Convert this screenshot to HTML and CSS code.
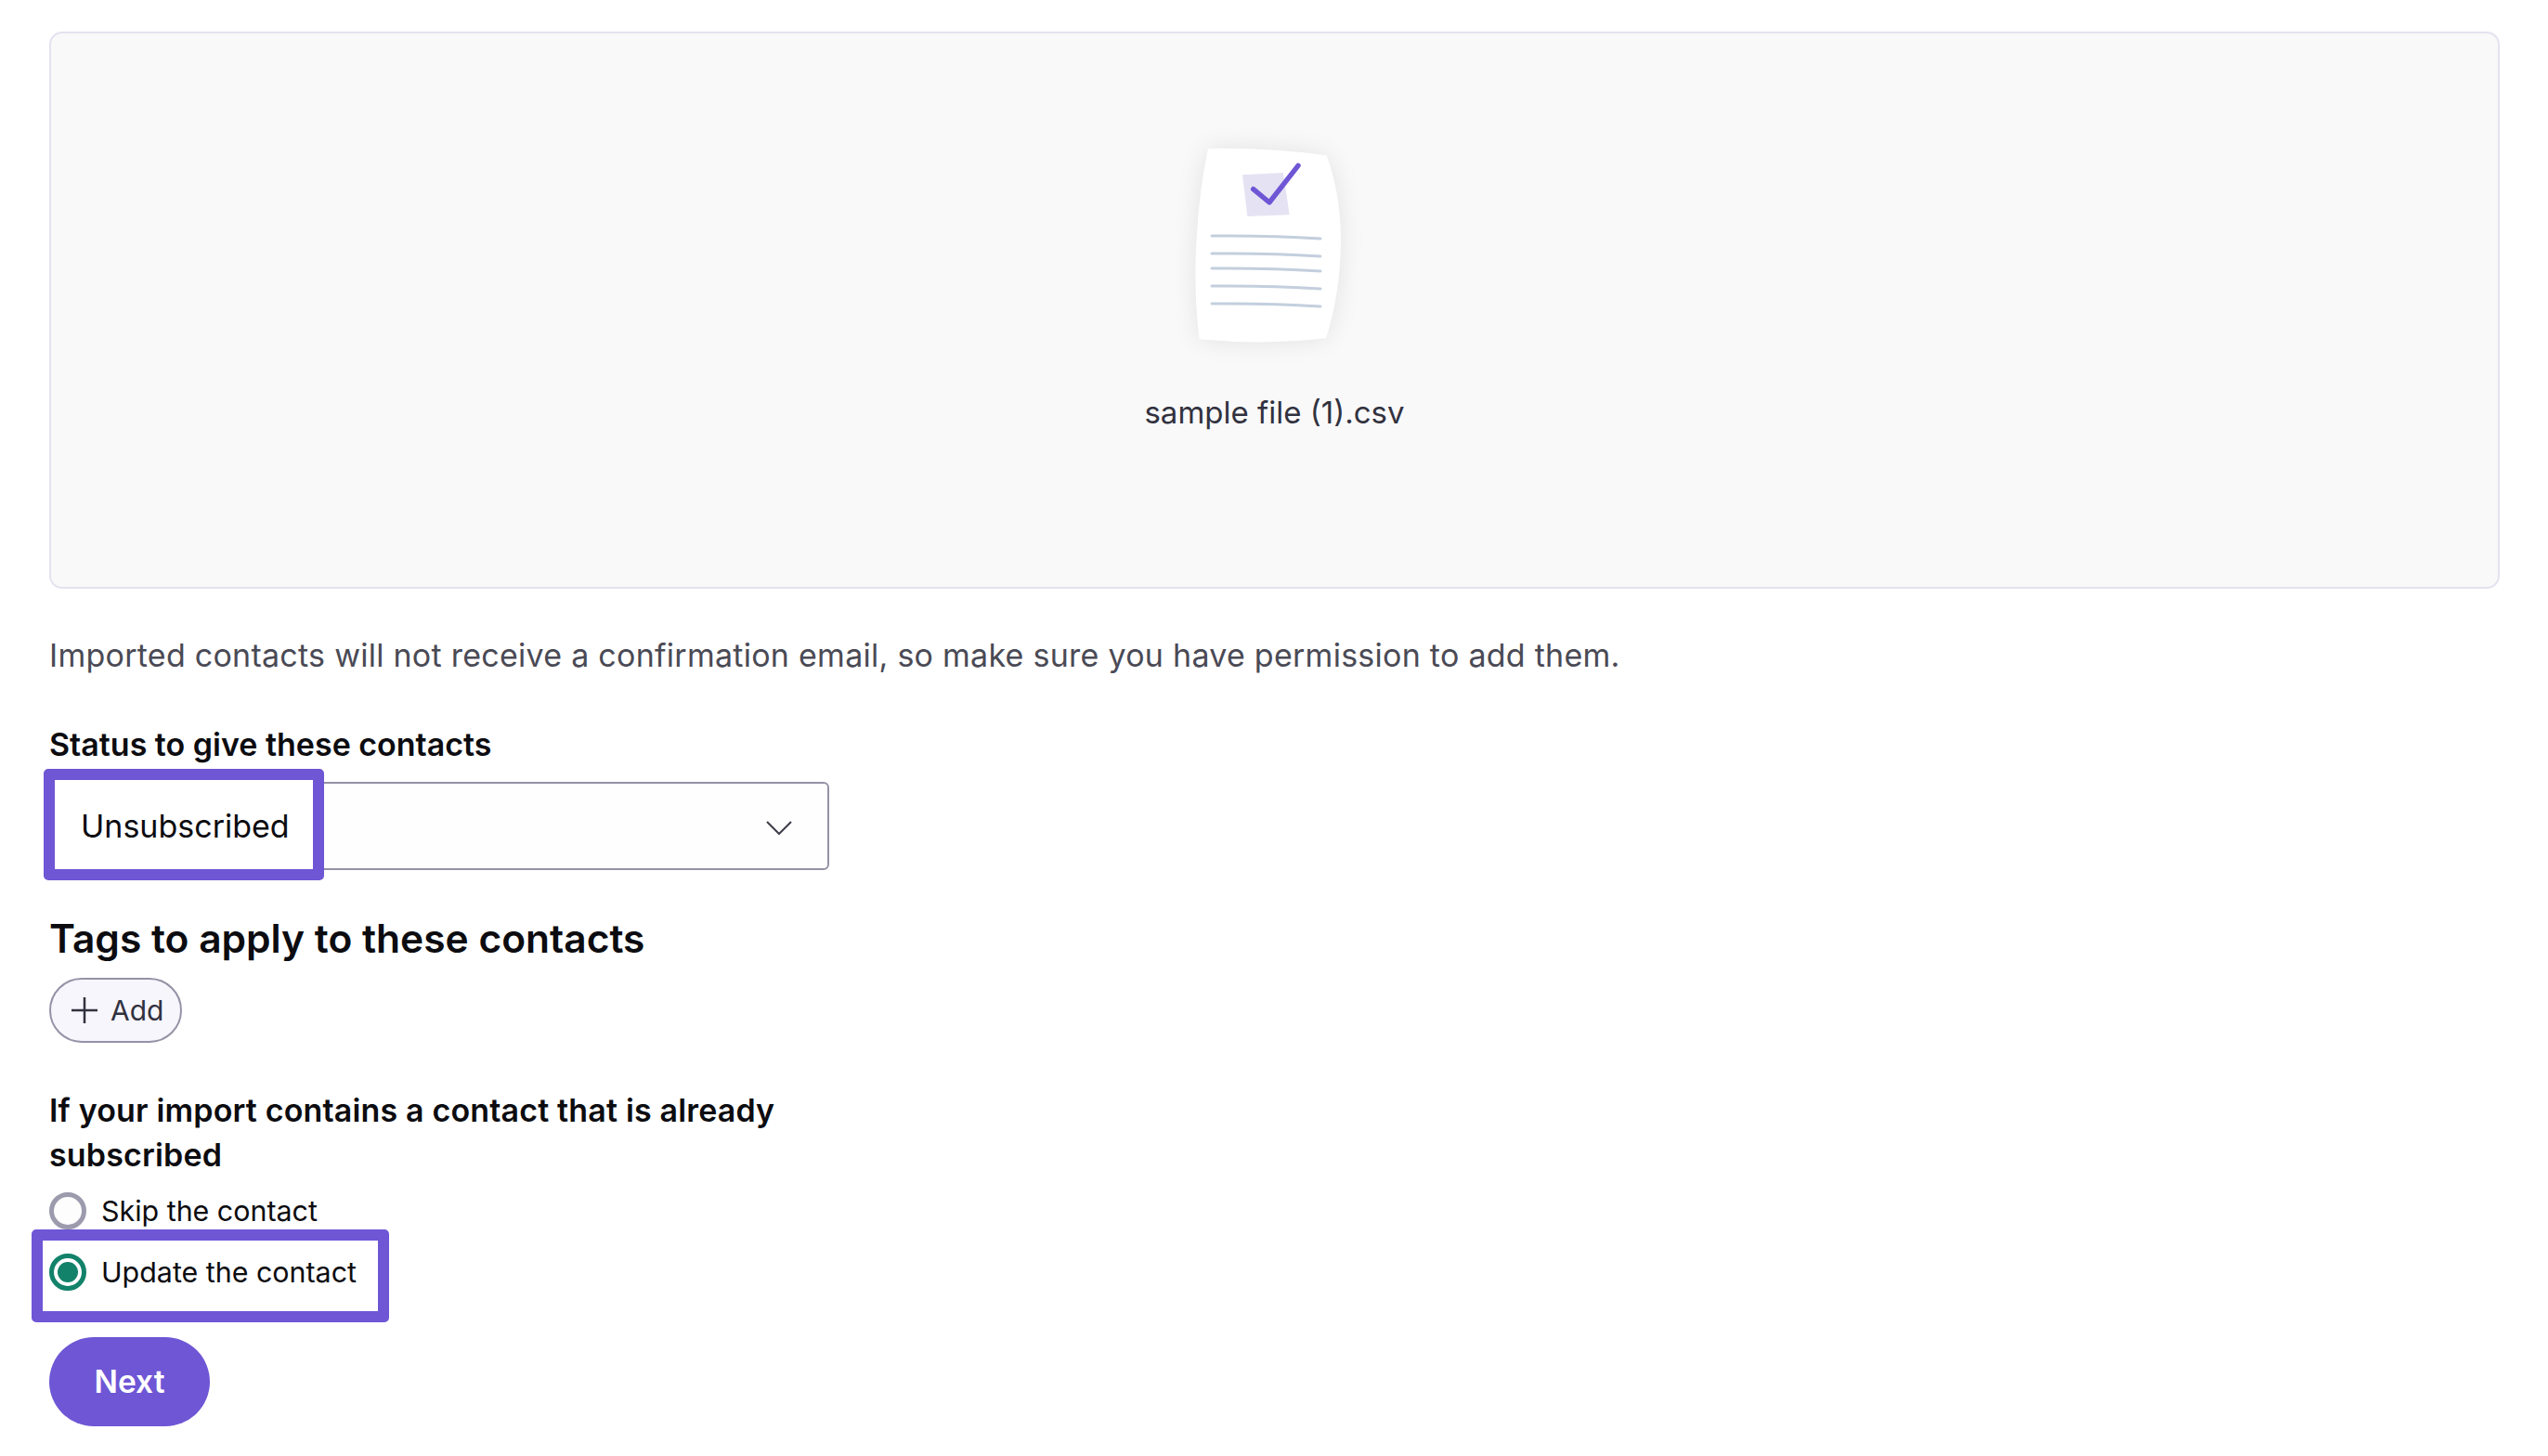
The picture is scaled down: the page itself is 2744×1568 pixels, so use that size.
FILE: index.html
```html
<!DOCTYPE html>
<html lang="en">
<head>
  <meta charset="UTF-8">
  <title>Import contacts</title>
  <link rel="stylesheet" href="styles.css">
</head>
<body>

  <div class="dropzone">
    <svg class="file-art" viewBox="0 0 1038 870" width="346" height="290" aria-hidden="true">
      <defs>
        <filter id="soft" x="-40%" y="-40%" width="180%" height="180%">
          <feGaussianBlur stdDeviation="42"/>
        </filter>
      </defs>
      <path class="paper-shadow" d="M303 120 Q500 116 686 142 Q732 270 732 420 Q730 590 684 733 Q480 756 275 736 Q262 640 262 500 Q268 280 303 120Z" filter="url(#soft)"/>
      <path class="paper" d="M303 120 Q500 116 686 142 Q732 270 732 420 Q730 590 684 733 Q480 756 275 736 Q262 640 262 500 Q268 280 303 120Z"/>
      <path class="check-box" d="M414 205 L546 198 L566 334 L430 339Z"/>
      <path class="check" d="M449 251 L501 294 L594 175"/>
      <g class="lines">
        <path d="M315 402 Q500 400 666 411"/>
        <path d="M315 459 Q500 457 666 468"/>
        <path d="M315 507 Q500 505 666 516"/>
        <path d="M315 564 Q500 562 666 573"/>
        <path d="M315 621 Q500 619 666 630"/>
      </g>
    </svg>
    <p class="file-name">sample file (1).csv</p>
  </div>

  <p class="note">Imported contacts will not receive a confirmation email, so make sure you have permission to add them.</p>

  <label class="field-label">Status to give these contacts</label>
  <div class="select">
    <div class="select-mark">Unsubscribed</div>
    <svg class="chevron" viewBox="0 0 28 15" width="28" height="15" aria-hidden="true">
      <path d="M1 1 L14 14 L27 1"/>
    </svg>
  </div>

  <h2 class="tags-title">Tags to apply to these contacts</h2>
  <button class="add-btn" type="button">
    <svg viewBox="0 0 28 28" width="28" height="28" aria-hidden="true">
      <path d="M14 0 V28 M0 14 H28"/>
    </svg>
    Add
  </button>

  <p class="question">If your import contains a contact that is already subscribed</p>

  <label class="radio-row">
    <input type="radio" name="existing">
    <span>Skip the contact</span>
  </label>
  <label class="radio-row radio-row-marked">
    <input type="radio" name="existing" checked>
    <span>Update the contact</span>
  </label>

  <button class="next-btn" type="button">Next</button>

</body>
</html>
```

FILE: styles.css
```css
:root {
  --purple: #6e56d5;
  --grey-line: #9492a6;
  --green: #12826a;
}

*, *::before {
  margin: 0;
  padding: 0;
  box-sizing: border-box;
}

body {
  padding: 34px 52px 0 53px;
  background: #fff;
  font-family: Inter, 'Open Sans', sans-serif;
  color: #0c0c10;
}

.dropzone {
  height: 600px;
  padding-top: 84px;
  background: #f9f9f9;
  border: 2px solid #e4e2f0;
  border-radius: 14px;
  display: flex;
  flex-direction: column;
  align-items: center;
}

.file-art {
  display: block;
}

.paper-shadow {
  fill: #000;
  opacity: 0.09;
}

.paper {
  fill: #fff;
}

.check-box {
  fill: #e5e3f3;
}

.check {
  fill: none;
  stroke: var(--purple);
  stroke-width: 16;
  stroke-linecap: round;
  stroke-linejoin: round;
}

.lines path {
  fill: none;
  stroke: #c3cfdd;
  stroke-width: 9;
  stroke-linecap: round;
}

.file-name {
  margin-top: 10px;
  font-size: 33px;
  line-height: 48px;
  color: #32323f;
}

.note {
  margin-top: 48px;
  font-size: 34px;
  letter-spacing: 0.26px;
  line-height: 48px;
  color: #4a4a55;
}

.field-label {
  display: block;
  margin-top: 48px;
  font-size: 34px;
  font-weight: 600;
  line-height: 48px;
}

.select {
  position: relative;
  width: 840px;
  height: 95px;
  margin-top: 16px;
  display: flex;
  align-items: center;
  justify-content: flex-end;
  padding-right: 38px;
  background: #fefefe;
  border: 2px solid var(--grey-line);
  border-radius: 6px;
}

/* annotation drawn on top of the select */
.select-mark {
  position: absolute;
  left: -8px;
  top: -16px;
  width: 302px;
  height: 120px;
  display: flex;
  align-items: center;
  padding: 2px 0 0 28px;
  background: #fff;
  border: 12px solid var(--purple);
  border-radius: 5px;
  font-size: 34px;
}

.chevron {
  margin-top: 4px;
}

.chevron path {
  fill: none;
  stroke: #3c3c48;
  stroke-width: 2;
}

.tags-title {
  margin-top: 46px;
  font-size: 42.5px;
  font-weight: 600;
  line-height: 56px;
}

.add-btn {
  display: flex;
  align-items: center;
  gap: 14px;
  width: 143px;
  height: 70px;
  margin-top: 14px;
  padding-left: 22px;
  background: #f7f6fc;
  border: 2.5px solid var(--grey-line);
  border-radius: 35px;
  font-family: inherit;
  font-size: 30px;
  color: #32323f;
}

.add-btn path {
  fill: none;
  stroke: #32323f;
  stroke-width: 2.5;
}

.question {
  width: 840px;
  margin-top: 49px;
  font-size: 34px;
  letter-spacing: 0.16px;
  font-weight: 600;
  line-height: 48px;
}

.radio-row {
  position: relative;
  display: flex;
  align-items: center;
  gap: 16px;
  height: 40px;
  margin-top: 16px;
  font-size: 30.4px;
}

.radio-row span {
  position: relative;
}

.radio-row-marked {
  margin-top: 26px;
}

/* annotation around the second option */
.radio-row-marked::before {
  content: "";
  position: absolute;
  left: -19px;
  top: -26px;
  width: 385px;
  height: 100px;
  border: 12px solid var(--purple);
  border-radius: 5px;
}

.radio-row input {
  appearance: none;
  flex: none;
  width: 40px;
  height: 40px;
  background: #fdfdfd;
  border: 5px solid #9c9aad;
  border-radius: 50%;
}

.radio-row input:checked {
  background: var(--green);
  background-clip: content-box;
  padding: 4px;
  border-color: var(--green);
}

.next-btn {
  display: block;
  width: 173px;
  height: 96px;
  margin-top: 50px;
  background: var(--purple);
  border: none;
  border-radius: 48px;
  font-family: inherit;
  font-size: 33.5px;
  font-weight: 600;
  color: #fff;
}
```
